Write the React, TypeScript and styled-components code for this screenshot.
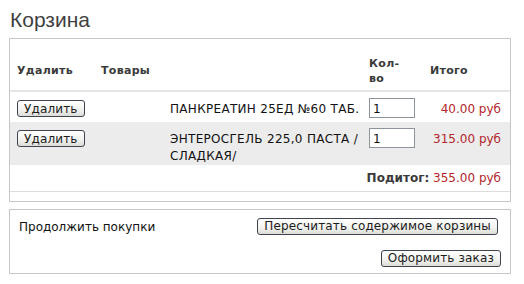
import styled, { createGlobalStyle } from 'styled-components';

type CartItem = {
	id: number;
	name: string;
	qty: number;
	total: string;
};

const items: CartItem[] = [
	{ id: 1, name: 'ПАНКРЕАТИН 25ЕД №60 ТАБ.', qty: 1, total: '40.00 руб' },
	{ id: 2, name: 'ЭНТЕРОСГЕЛЬ 225,0 ПАСТА / СЛАДКАЯ/', qty: 1, total: '315.00 руб' },
];

const GlobalStyle = createGlobalStyle`
	body {
		margin: 0;
		background: #fff;
		font-family: 'DejaVu Sans', Verdana, sans-serif;
		font-size: 12px;
		color: #111;
	}
`;

const App = () => {
	return (
		<>
			<GlobalStyle />
			<Page>
				<Title>Корзина</Title>
				<Box>
					<CartTable>
						<colgroup>
							<col style={{ width: 84 }} />
							<col style={{ width: 69 }} />
							<col style={{ width: 199 }} />
							<col style={{ width: 61 }} />
							<col />
						</colgroup>
						<thead>
							<tr>
								<Th>Удалить</Th>
								<Th colSpan={2}>Товары</Th>
								<Th>Кол-<br />во</Th>
								<Th>Итого</Th>
							</tr>
						</thead>
						<tbody>
							{items.map((item, idx) => (
								<Row key={item.id} $shaded={idx % 2 === 1}>
									<Td>
										<OldButton>Удалить</OldButton>
									</Td>
									<Td />
									<NameCell>{item.name}</NameCell>
									<Td>
										<QtyInput defaultValue={item.qty} />
									</Td>
									<PriceCell>{item.total}</PriceCell>
								</Row>
							))}
							<SubtotalRow>
								<SubtotalCell colSpan={5}>
									<b>Подитог:</b> <Price>355.00 руб</Price>
								</SubtotalCell>
							</SubtotalRow>
							<tr>
								<EmptyCell colSpan={5} />
							</tr>
						</tbody>
					</CartTable>
				</Box>
				<ActionsBox>
					<ContinueText>Продолжить покупки</ContinueText>
					<ButtonStack>
						<OldButton>Пересчитать содержимое корзины</OldButton>
						<OldButton $nudge>Оформить заказ</OldButton>
					</ButtonStack>
				</ActionsBox>
			</Page>
		</>
	);
};

const Page = styled.div`
	width: 502px;
	padding: 7px 0 0 9px;
`;

const Title = styled.h1`
	margin: 0 0 5px 1px;
	font-family: Arial, 'Liberation Sans', sans-serif;
	font-weight: normal;
	font-size: 21px;
	line-height: 26px;
	color: #3f3f3f;
`;

const Box = styled.div`
	border: 1px solid #c6c6c6;
`;

const CartTable = styled.table`
	width: 100%;
	border-collapse: collapse;
	table-layout: fixed;
`;

const Th = styled.th`
	height: 39px;
	padding: 12px 7px 0;
	text-align: left;
	vertical-align: middle;
	font-size: 11px;
	line-height: 15px;
	letter-spacing: 0.3px;
	font-weight: bold;
	color: #3a3a3a;
	border-bottom: 2px solid #e4e4e4;
`;

const Row = styled.tr<{ $shaded: boolean }>`
	background: ${({ $shaded }) => ($shaded ? '#ececec' : '#fff')};
	height: ${({ $shaded }) => ($shaded ? '41px' : '31px')};
`;

const Td = styled.td`
	padding: 8px 7px 0;
	vertical-align: top;
`;

const NameCell = styled(Td)`
	padding: 9px 0 0 7px;
	line-height: 17px;
	letter-spacing: 0.3px;
	color: #111;
`;

const PriceCell = styled(Td)`
	padding-top: 9px;
	padding-right: 9px;
	line-height: 17px;
	text-align: right;
	color: #b3262b;
	white-space: nowrap;
`;

const Price = styled.span`
	color: #b3262b;
`;

const SubtotalRow = styled.tr`
	height: 26px;
`;

const SubtotalCell = styled.td`
	text-align: right;
	padding: 0 9px 0 0;
	border-bottom: 1px solid #dcdcdc;
	color: #3a3a3a;
`;

const EmptyCell = styled.td`
	height: 9px;
	padding: 0;
`;

const QtyInput = styled.input`
	box-sizing: border-box;
	width: 46px;
	height: 20px;
	margin: -2px 0 0 0;
	padding: 2px 3px 0;
	border: 1px solid #8d949c;
	font-family: 'DejaVu Sans', Verdana, sans-serif;
	font-size: 12px;
	color: #111;
	background: #fff;
`;

const OldButton = styled.button<{ $nudge?: boolean }>`
	box-sizing: border-box;
	height: 17px;
	padding: 0 6px;
	margin-right: ${({ $nudge }) => ($nudge ? '-3px' : '0')};
	border: 1px solid #3e4450;
	border-radius: 3px;
	background: linear-gradient(#ffffff, #f1f1ee 60%, #dcdcd7);
	font-family: 'DejaVu Sans', Verdana, sans-serif;
	font-size: 12px;
	line-height: 14px;
	letter-spacing: 0.15px;
	color: #1c1c1c;
	cursor: pointer;
`;

const ActionsBox = styled.div`
	display: flex;
	justify-content: space-between;
	align-items: flex-start;
	height: 65px;
	margin-top: 7px;
	padding: 8px 12px 0 9px;
	box-sizing: border-box;
	border: 1px solid #c6c6c6;
`;

const ContinueText = styled.div`
	font-size: 12px;
	line-height: 16px;
	padding-top: 1px;
	color: #111;
`;

const ButtonStack = styled.div`
	display: flex;
	flex-direction: column;
	align-items: flex-end;
	gap: 15px;
`;

export default App;
